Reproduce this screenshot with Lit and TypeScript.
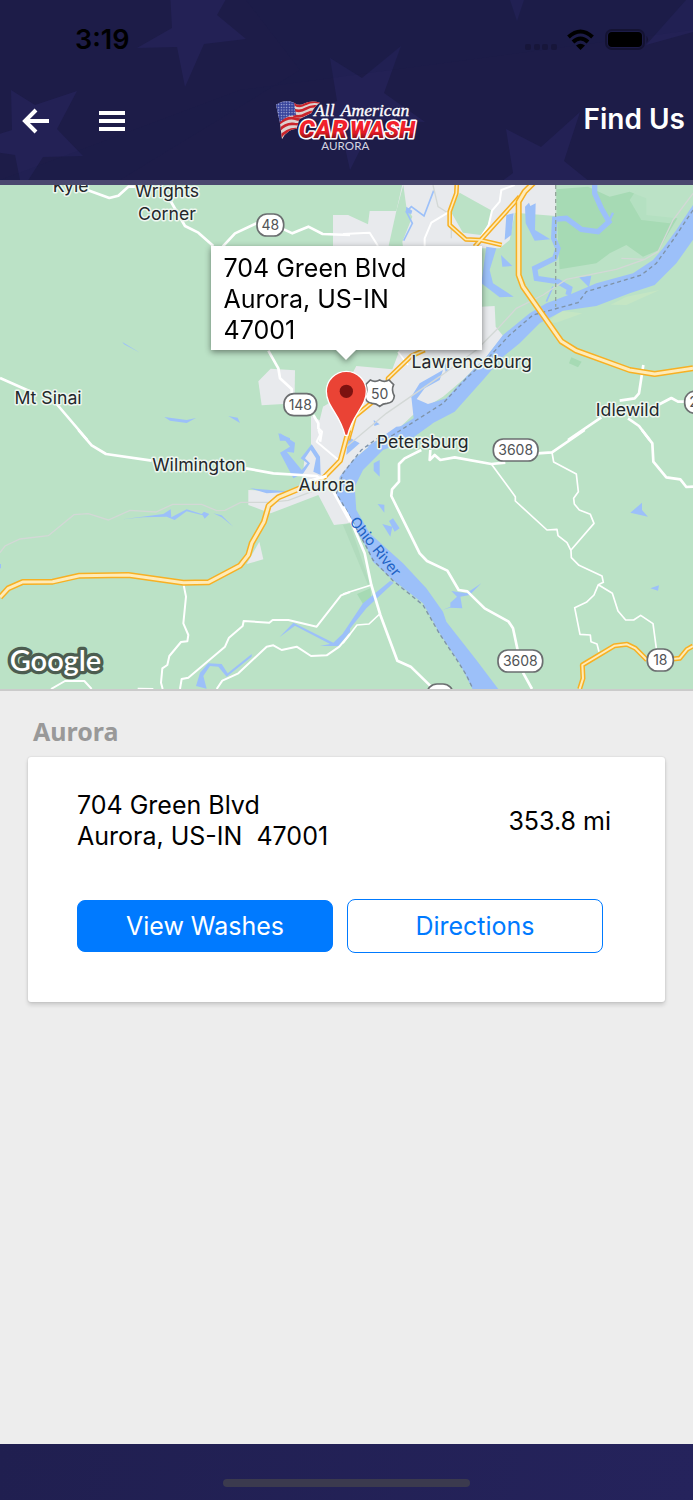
import { LitElement, html, svg, css } from "lit";
import { customElement, property } from "lit/decorators.js";

const STAR = "M0,-100 L25,-32 L96,-31 L39,12 L59,81 L0,40 L-59,81 L-39,12 L-96,-31 L-25,-32 Z";

@customElement("status-bar")
class StatusBar extends LitElement {
  static styles = css`
    :host { display: flex; justify-content: space-between; align-items: center; height: 32px; padding: 0 44px 0 75px; color: #000; }
    .time { font-size: 27px; font-weight: 600; line-height: 32px; }
    svg { display: block; }
  `;
  render() {
    return html`
      <span class="time">3:19</span>
      <svg width="124" height="24" viewBox="0 0 124 24" aria-hidden="true">
        <g fill="#17163a">
          <rect x="0" y="16" width="6" height="6" rx="2" /><rect x="9" y="16" width="6" height="6" rx="2" />
          <rect x="17" y="16" width="6" height="6" rx="2" /><rect x="26" y="16" width="6" height="6" rx="2" />
        </g>
        <g fill="none" stroke="#000" stroke-width="4">
          <path d="M43.500,9 Q55.500,-2 67.500,9" /><path d="M48,14 Q55.500,7 63,14" />
        </g>
        <path d="M51,17.500 Q55.500,14 60,17.500 L55.500,22 Z" />
        <rect x="81" y="2" width="38" height="19" rx="6" fill="none" stroke="#141333" stroke-width="2" />
        <rect x="83" y="4" width="34" height="15" rx="4" />
        <path d="M121.500,8 q3,3.500 0,7z" fill="#141333" />
      </svg>
    `;
  }
}

@customElement("brand-logo")
class BrandLogo extends LitElement {
  static styles = css`
    :host { display: block; }
    svg { display: block; width: 165px; height: 70px; }
    .script { font: italic 400 53px "Liberation Serif", serif; fill: #fff; stroke: #fff; stroke-width: 1px; }
    .block { font-family: Roboto, sans-serif; font-style: italic; font-weight: 900; fill: url(#red); stroke: #fff; stroke-width: 9px; paint-order: stroke; stroke-linejoin: round; }
    .town { font: 400 35px Lato, sans-serif; fill: #d5d5e2; }
  `;
  render() {
    return html`
      <svg viewBox="0 0 495 210" role="img" aria-label="All American Car Wash Aurora">
        <defs>
          <linearGradient id="red" x1="0" y1="0" x2="0" y2="1">
            <stop offset="0.3" stop-color="#f3202c" /><stop offset="0.6" stop-color="#e31c27" /><stop offset="0.8" stop-color="#8e1218" />
          </linearGradient>
          <clipPath id="flag"><path d="M36,44 Q62,26 90,38 Q104,50 122,40 Q142,30 168,38 Q150,50 142,70 L106,88 L98,116 Q70,116 54,148 Q50,96 36,44Z" /></clipPath>
          <pattern id="dots" width="8" height="8" patternUnits="userSpaceOnUse"><circle cx="4" cy="4" r="2" fill="#bcc3e6" /></pattern>
        </defs>
        <g clip-path="url(#flag)">
          <rect x="30" y="20" width="150" height="140" fill="#ddd2cf" />
          <g fill="none" stroke="#c9252c" stroke-width="8">
            <path d="M88,40 Q106,54 124,42 Q146,30 172,38" />
            <path d="M88,58 Q106,68 126,56 Q146,44 172,52" />
            <path d="M88,76 Q106,84 126,72 Q146,60 172,68" />
            <path d="M46,100 Q70,80 94,86 Q110,92 130,84" />
            <path d="M46,120 Q66,98 92,102 L118,104" />
            <path d="M48,142 Q70,114 104,118" />
          </g>
          <path d="M32,40 Q62,24 90,36 L96,76 Q70,74 46,98Z" fill="#37439b" />
          <path d="M32,40 Q62,24 90,36 L96,76 Q70,74 46,98Z" fill="url(#dots)" />
        </g>
        <text class="script" x="150" y="79">All</text>
        <text class="script" x="230" y="79">American</text>
        <text class="block" x="104" y="143" font-size="76">CAR</text>
        <text class="block" x="257" y="143" font-size="71">WASH</text>
        <text class="town" x="172" y="180">AURORA</text>
      </svg>
    `;
  }
}

const NW = "translate(0 -15)";
const NE = "translate(1029 -15)";
const SW = "translate(0 735)";
const SE = "translate(1029 735)";

const highway = (transform: string, d: string, width = 18) => svg`
  <g transform=${transform} fill="none" stroke-linejoin="round">
    <path d=${d} stroke="#f7b023" stroke-width=${width} />
    <path d=${d} stroke="#ffebb8" stroke-width=${width - 9} />
  </g>`;

const shield = (x: number, y: number, label: string, width: number) => svg`
  <rect x=${x - width / 2} y=${y - 33} width=${width} height="66" rx="30" fill="#fff" stroke="#6b6e70" stroke-width="5" />
  <text class="route" x=${x} y=${y + 15}>${label}</text>`;

@customElement("area-map")
class AreaMap extends LitElement {
  static styles = css`
    :host { display: block; position: relative; overflow: hidden; background: #bbe2c6; }
    .canvas { display: block; width: 100%; height: 504px; }
    .place { font: 400 53px Inter, sans-serif; fill: #23272b; stroke: #edf6ef; stroke-width: 9px; paint-order: stroke; stroke-linejoin: round; text-anchor: middle; }
    .route { font: 400 42px Inter, sans-serif; fill: #505356; text-anchor: middle; }
    .river { font: 400 44px Inter, sans-serif; fill: #1e62c4; }
    .google { font: 600 87px Lato, sans-serif; fill: #fff; stroke: #4c5d50; stroke-width: 20px; paint-order: stroke; stroke-linejoin: round; }
    .bubble { position: absolute; top: 61px; left: 50%; box-sizing: border-box; width: 271px; margin-left: -136px; padding: 7px 13px 4px; background: #fff; color: #000; font-size: 25px; line-height: 31px; filter: drop-shadow(0 2px 3px rgb(0 0 0 / 45%)); }
    .bubble::after { content: ""; position: absolute; top: 100%; left: 50%; margin-left: -10px; border: 10px solid transparent; border-top-color: #fff; border-bottom: 0; }
  `;
  render() {
    return html`
      <svg class="canvas" viewBox="0 0 2079 1512" preserveAspectRatio="xMidYMid slice" role="img" aria-label="Map around Aurora">
        <rect width="2079" height="1512" fill="#bbe2c6" />
        <g fill="#e8eaed">
          <g transform=${NW}>
            <path d="M812,566 L885,571 L884,640 L850,672 L785,676 L775,604Z" />
            <path d="M1045,105 V200 H1000 L1008,170Z" />
            <path d="M970,680 L1050,690 V800 H933 V708 L962,722Z" />
          </g>
          <g transform=${NE}>
            <path d="M181,0 H638 V108 L515,98 L500,180 L470,205 H412 L400,320 H415 V380 L455,378 L458,440 L480,467 L430,530 L365,595 L300,650 L210,705 L130,780 L-90,800 L-60,680 L-10,650 L40,558 L148,568 L168,515 L137,198 H-30 V105 L15,105 L75,133 L80,93 H160Z" />
          </g>
          <g transform=${SW}>
            <path d="M933,-10 H1100 L1060,100 L1010,150 L1015,200 L1060,278 L1002,285 L955,195 L812,250 L745,225 V180 L860,185 L905,170 L915,70 L940,55Z" />
            <path d="M778,335 L790,388 L740,402Z" />
          </g>
          <path transform=${SE} d="M0,-10 H180 L90,40 L30,90 L0,140 L-10,180 L0,240 L18,278 L-10,280 L-60,210Z" />
        </g>
        <g fill="#bbe2c6">
          <path transform=${NE} d="M350,38 L447,92 L435,135 L413,165 L360,158 L322,92Z M160,93 L181,15 L190,80 L208,110 L178,185 L180,200 L137,197Z" />
        </g>
        <g fill="#a6dab4">
          <path transform=${NE} d="M640,28 L735,20 L800,50 L860,35 L910,55 L910,105 L1003,115 L970,170 L948,210 L900,230 L850,195 L800,220 L760,250 L650,268 L645,180Z M685,532 L716,545 L705,562 L678,550Z" />
          <path transform=${SE} d="M42,492 L82,475 L84,500 L65,530Z" />
        </g>
        <path transform=${SE} d="M0,285 L20,280 L80,460 L75,465Z" fill="#b1dbbd" />
        <path transform=${NE} d="M890,15 H1050 V70 L980,130 L895,120 L860,60Z" fill="#bbe2c6" opacity="0.7" />
        <path transform=${NE} d="M950,330 L850,375 L803,374 L850,350Z M718,400 L640,428 L610,428 L655,392Z" fill="#c5e6c4" />

        <g fill="#9cc0f9">
          <g transform=${NE}>
            <path d="M1060,60 L1000,150 L960,205 L930,240 L870,280 L760,310 L690,340 L610,370 L560,400 L480,465 L430,530 L370,590 L310,655 L255,672 L205,650 L212,715 L130,765 L70,800 H160 L240,745 L335,695 L420,600 L480,530 L530,490 L590,430 L660,392 L760,378 L860,340 L935,315 L1000,250 L1060,165Z" />
            <path d="M546,80 L558,68 L562,78 L578,70 L576,150 L622,178 L575,182 L548,130Z M474,225 L508,258 L478,260Z M708,292 L745,287 L738,322Z M430,200 L460,205 L440,270 L450,310 L512,350 L470,352 L415,310Z M490,105 L512,100 L505,165 L485,180Z M205,650 L230,610 L300,570 L290,600 L245,625 L215,665Z M92,720 L110,733 L94,738Z M303,540 L318,570 L308,578Z" />
            <path d="M190,80 L208,92 L205,102 L188,98Z" />
          </g>
          <g transform=${NW}>
            <path d="M493,711 L560,720 L588,714 L560,729 L510,722Z M685,708 L713,713 L720,729Z M367,486 L420,518 L372,493Z M835,760 L870,775 V782 H840Z" />
          </g>
          <g transform=${SW}>
            <path d="M838,8 L885,38 L882,68 L860,65 L905,120 L922,100 L902,85 L935,43 L960,80 L962,135 L940,125 L948,85 L932,60 L915,85 L930,100 L910,130 L880,145 L840,68 L870,50Z M750,175 L880,185 L800,190Z M368,268 L490,252 L512,238 L514,262 L560,238 L605,252 L612,245 L628,252 L614,266 L608,256 L560,244 L524,270 L500,260 L430,262Z M640,250 L665,256 L700,290 L665,262Z M838,622 L880,578 L1000,638 L1050,590 V605 L1015,648 H960 L990,642 L885,587Z M600,728 L625,700 L665,702 L683,730 L755,672 V680 L680,740 L655,710 L630,708 L610,738 L620,776 L588,768Z M0,402 H3 V415 H0Z" />
          </g>
          <g transform=${SE}>
            <path d="M270,-20 L200,30 L120,60 L60,120 L35,170 L40,240 L80,310 L180,400 L250,475 L300,545 L310,575 L400,690 L468,780 H390 L350,700 L290,610 L240,520 L150,450 L90,395 L70,350 L0,240 L-20,200 L-10,140 L30,90 L90,40 L160,-10Z" />
            <path d="M15,20 L50,40 L10,75Z M92,100 L110,90 V140 L92,122Z M104,222 L124,224 V248Z M118,282 L148,290 L142,320Z M138,273 L150,265 L170,295 L155,305Z M325,483 L370,490 L415,460 L380,495 L352,500 L358,535 L320,533 L298,540 L322,530 V518 L342,500Z M862,248 L897,218 V240 L915,260Z M922,475 L948,466 L945,482Z" />
            <path d="M142,452 L60,520 L0,610 V622 L70,535 L152,458Z" />
          </g>
        </g>
        <g transform=${NE} fill="none" stroke="#9cc0f9">
          <path d="M755,0 V40 L775,85 L798,125 L765,155 L715,148 L670,115 L635,118 L632,175 L645,205 L635,235 L575,265 L580,295 L645,305 L680,325 L675,345" stroke-width="16" />
          <path d="M810,98 L795,130" stroke-width="7" />
          <path d="M272,32 L243,108 L205,80 L190,95 L208,130 L182,182 M610,365 L630,320" stroke-width="5" />
        </g>

        <g fill="none" stroke="#d3d8d6" stroke-width="4">
          <path transform=${NE} d="M270,15 L285,80 L325,105 V175 M1050,40 L990,120 L945,215 L905,238 L835,235 M905,238 L820,268 L670,298 L600,345 L520,385 L465,445 L400,510 L290,590 L130,700 L10,800" />
          <path transform=${SW} d="M0,368 L15,348 L60,327 L145,317 L222,254 L265,251 L325,270 L390,241 L468,246 L518,223 H605 L650,242 L675,241 L722,217 H810 L865,211 L935,185" />
        </g>
        <g fill="none" stroke="#7f93a8" stroke-width="4" stroke-dasharray="12 9">
          <path transform=${NE} d="M638,15 V380" stroke="#93a69b" />
          <path transform=${NE} d="M1050,90 L990,180 L940,250 L895,285 L730,335 L705,368 L570,405 L500,465 L430,540 L370,595 L300,670 L150,765 L110,785" />
          <path transform=${SE} d="M110,20 L55,60 L0,130 L-20,190 L10,240 L70,350 L90,390 L150,452 L240,525 L290,612 L345,695 L370,735 L390,777" />
        </g>

        <g fill="none" stroke="#fff" stroke-width="8" stroke-linejoin="round">
          <g transform=${NW}>
            <path d="M262,30 L328,54 L355,47 L385,20 H410 M510,60 L555,138 L595,158 L640,198 M668,200 L705,160 L780,125 M845,145 L877,160 L925,140 L968,162 L1050,165" />
            <path d="M805,512 L835,565 L840,595 L875,627 V645 M0,594 L110,643 M170,672 L262,780 M940,705 L955,730 V745 L965,755 L960,785" />
          </g>
          <g transform=${NE}>
            <path d="M515,15 L475,30 L470,65 L447,92 L437,135 L415,170 M320,95 L265,128 L245,175 V198 M0,162 L80,158 L105,198" stroke-width="6" />
            <path d="M901,555 L888,640 L875,655 L830,662 M775,712 L675,780 M855,715 L888,738 L920,780 M945,675 L985,654 L1005,665 H1030" />
            <path d="M165,515 L195,555" stroke-width="5" />
          </g>
          <g transform=${SW}>
            <path d="M235,0 L275,46 L318,72 L455,92 M738,115 L820,130 L950,138 L1000,185 L1050,275" />
            <path d="M955,0 L960,15 L950,35 L1018,92 L980,130" stroke-width="6" />
            <path d="M550,460 L558,500 L550,580 L565,615 L562,634 L543,636 L508,678 L502,705 L487,715 L483,758 L488,777 M153,777 L195,753 H253 L275,777 M540,777 L545,747 L565,743 L675,650 L687,623 L728,588 L731,573 L808,578 L818,570 H865 L950,590 L1023,496 L1050,486 M650,777 L667,752 L715,730 L800,650 L820,646 L845,660 L890,650 L933,678 L980,676 L1018,650 L1050,612 M413,776 L460,777" stroke-width="6" />
          </g>
          <g transform=${SE}>
            <path d="M0,230 L25,275 L65,370 L85,465 L112,555 L163,692 L203,710 L270,775" />
            <path d="M235,60 L185,85 L168,102 V155 L147,178 L145,198 L230,370 L252,393 L313,422 L347,480 L373,484 L425,535 L497,575 L510,595 L525,665 M540,728 L567,777" />
            <path d="M262,60 L260,90 L275,75 L292,90 L335,82 L445,102 L487,98 M583,70 L627,67 L725,0 M897,0 L928,40 L931,95 L970,142 L1012,148 L1030,171 L1050,170" />
            <path d="M445,102 L517,200 V213 L612,300 L642,298 L645,317 L672,338 L684,362 L685,383 L708,406 L777,438 L781,457 L766,464 L753,495 L730,517 L695,533 L711,613 L742,615 L744,635 L762,642 L768,665 M627,67 L632,96 L700,132 L706,185 L692,205 L694,222 L709,240 L742,253 L753,280 L684,360 M766,464 L808,490 L825,543 L848,570 H872 L893,556 L930,581 L940,655 M0,492 L85,465 M110,552 L78,582 L42,585 L0,640" stroke-width="5" />
          </g>
        </g>

        ${highway(NE, "M342,0 L340,40 L320,95 V135 L368,178 L412,180 L476,195 M530,50 L395,200", 14)}
        ${highway(NE, "M580,0 L545,35 L527,65 V285 L540,320 L655,484 L700,512 L860,570 L935,582 L1050,565")}
        ${highway(NE, "M245,510 L205,528 L135,595 V625 L120,640 L35,710 L15,780", 14)}
        ${highway(SE, "M17,0 L-8,92 L-50,135 L-80,165", 16)}
        ${highway(SW, "M925,165 L895,177 L835,202 L806,227 L792,275 L755,340 L745,375 L720,407 L625,457 L550,458 L385,435 L238,437 L158,455 L68,456 L25,475 L0,502")}
        ${highway(SE, "M710,777 L720,745 L718,705 L815,647 L852,643 L877,655 L912,690 M990,687 L1010,685 L1032,658 L1050,648", 15)}
        <path transform=${SW} d="M905,160 L980,138" stroke="#fff" stroke-width="9" />

        <g transform=${NW}>
          <text class="place" x="212" y="37">Kyle</text>
          <text class="place" x="501" y="50">Wrights</text>
          <text class="place" x="501" y="120">Corner</text>
          <text class="place" x="144" y="671">Mt Sinai</text>
          ${shield(811, 135, "48", 80)}
          ${shield(901, 674, "148", 98)}
        </g>
        <g transform=${NE}>
          <text class="place" x="386" y="563">Lawrenceburg</text>
          <text class="place" x="854" y="708">Idlewild</text>
          <path d="M82,600 Q96,608 110,600 Q124,608 138,600 L152,614 Q144,630 154,648 Q152,668 132,670 Q120,670 110,679 Q100,670 88,670 Q68,668 66,648 Q76,630 68,614Z" fill="#fff" stroke="#6b6e70" stroke-width="5" />
          <text class="route" x="110" y="656">50</text>
          ${shield(1065, 667, "20", 80)}
        </g>
        <g transform=${SW}>
          <text class="place" x="597" y="124">Wilmington</text>
          <text class="place" x="980" y="182">Aurora</text>
          <text class="google" x="29" y="722">Google</text>
        </g>
        <g transform=${SE}>
          <text class="place" x="239" y="53">Petersburg</text>
          ${shield(518, 60, "3608", 134)}
          ${shield(532, 693, "3608", 134)}
          ${shield(952, 690, "18", 78)}
          ${shield(291, 795, "56", 78)}
          <text class="river" transform="translate(18 276) rotate(51)">Ohio River</text>
        </g>
        <g transform=${NE}>
          <path d="M10,574 a60,60 0 0 1 60,60 C70,680 30,700 14,766 H6 C-10,700 -50,680 -50,634 a60,60 0 0 1 60,-60Z" fill="#ea4335" stroke="#fff" stroke-width="4" />
          <circle cx="10" cy="634" r="20" fill="#7d1210" />
        </g>
      </svg>
      <div class="bubble">704 Green Blvd<br />Aurora, US-IN<br />47001</div>
    `;
  }
}

@customElement("location-card")
class LocationCard extends LitElement {
  @property() town = "";
  @property() street = "";
  @property() region = "";
  @property() distance = "";

  static styles = css`
    :host { display: block; padding: 24px 28px; }
    .town { margin: 0 5px 9px; font: 700 25px/33px "Noto Sans", sans-serif; color: #999; }
    .card { display: flex; flex-direction: column; gap: 47px; padding: 33px 54px 49px 49px; border-radius: 3px; background: #fff; box-shadow: 0 0 2px rgb(0 0 0 / 16%), 0 3px 4px rgb(0 0 0 / 14%); }
    .info { display: flex; justify-content: space-between; align-items: center; font-size: 25px; line-height: 31px; color: #000; }
    .address { margin: 0; font-style: normal; white-space: pre; }
    .actions { display: grid; grid-template-columns: 1fr 1fr; align-items: center; gap: 14px; padding-right: 8px; }
    button { height: 54px; padding: 0; border: 1px solid #007aff; border-radius: 8px; background: #fff; color: #007aff; font: 400 25px/31px Inter, sans-serif; cursor: pointer; }
    .primary { height: 52px; background: #007aff; color: #fff; }
  `;
  render() {
    return html`
      <h2 class="town">${this.town}</h2>
      <article class="card">
        <div class="info">
          <address class="address">${this.street}<br />${this.region}</address>
          <span>${this.distance}</span>
        </div>
        <div class="actions">
          <button class="primary" type="button">View Washes</button>
          <button type="button">Directions</button>
        </div>
      </article>
    `;
  }
}

@customElement("app-root")
class AppRoot extends LitElement {
  static styles = css`
    :host { display: flex; flex-direction: column; min-height: 100vh; background: #ededed; font-family: Inter, "Liberation Sans", sans-serif; }
    .header { position: relative; box-sizing: border-box; height: 185px; padding-top: 24px; border-bottom: 5px solid #4a486f; background: #1d1c48; overflow: hidden; }
    .stars { position: absolute; inset: 0; width: 100%; height: 180px; }
    status-bar, .nav { position: relative; }
    .nav { display: grid; grid-template-columns: 1fr auto 1fr; align-items: center; height: 70px; margin-top: 34px; padding: 0 8px; }
    .tools { display: flex; align-items: center; gap: 48px; padding: 0 0 8px 14px; }
    .tool { display: block; padding: 0; border: 0; background: none; cursor: pointer; }
    .tool svg { display: block; }
    .title { margin: 0; padding-bottom: 12px; text-align: right; font-size: 28px; font-weight: 600; line-height: 36px; color: #fff; }
    .map { border-bottom: 2px solid #cbcbcb; }
    main { flex: 1; }
    .footer { display: flex; justify-content: center; align-items: flex-end; box-sizing: border-box; height: 56px; padding-bottom: 13px; background: linear-gradient(100deg, #201f50, #25235c); }
    .handle { width: 247px; height: 8px; border-radius: 4px; background: #3b3a4e; }
  `;
  render() {
    return html`
      <header class="header">
        <svg class="stars" viewBox="0 0 693 180" preserveAspectRatio="xMidYMid slice" aria-hidden="true">
          <g fill="#232155">
            <path d="M170,-8 L172,28 L137,48 L177,47 L185,87 L204,44 L246,39 L217,15 L230,-8Z" />
            <path d="M11,90 L35,105 L77,91 L57,129 L83,156 L43,157 L22,190 L15,155 L-20,150 V140 L12,130Z" />
            <path d="M330,58 L362,78 L401,46 L384,93 L425,122 L375,120 L350,170 L340,125 L300,118 L337,101Z" />
            <path d="M506,129 L541,147 L580,112 L564,161 L600,190 H490 L513,173Z" />
            <path d="M510,0 H524 L517,21Z M686,0 L646,45 L700,30 V0Z" />
          </g>
          <path d="M0,180 L240,90 L693,30 V0 H246 L300,70 L120,180Z" fill="#1b1e4c" opacity="0.2" />
          <path d=${STAR} transform="translate(760 170) scale(0.6)" fill="#232155" />
        </svg>
        <status-bar></status-bar>
        <nav class="nav">
          <div class="tools">
            <button class="tool" type="button" aria-label="Back">
              <svg width="29" height="26" viewBox="0 0 29 26" fill="none" stroke="#fff" stroke-width="4"><path d="M27,13 H4 M14,2 L3,13 L14,24" /></svg>
            </button>
            <button class="tool" type="button" aria-label="Menu">
              <svg width="26" height="20" viewBox="0 0 26 20" fill="#fff"><path d="M0,0 H26 V4 H0Z M0,8 H26 V12 H0Z M0,16 H26 V20 H0Z" /></svg>
            </button>
          </div>
          <brand-logo></brand-logo>
          <h1 class="title">Find Us</h1>
        </nav>
      </header>
      <area-map class="map"></area-map>
      <main>
        <location-card town="Aurora" street="704 Green Blvd" region="Aurora, US-IN  47001" distance="353.8 mi"></location-card>
      </main>
      <footer class="footer"><div class="handle"></div></footer>
    `;
  }
}
